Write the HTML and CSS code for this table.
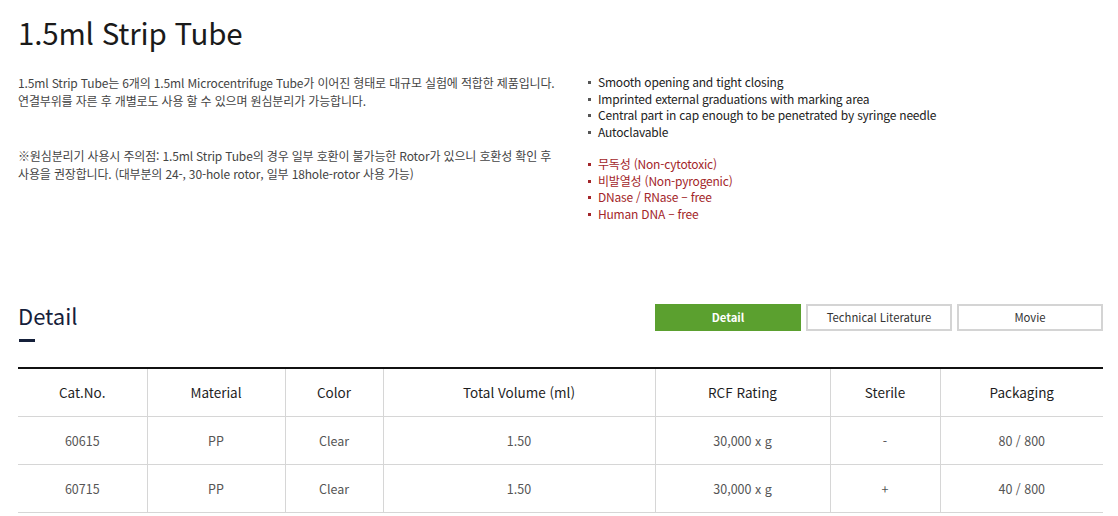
FILE: index.html
```html
<!DOCTYPE html>
<html lang="ko">
<head>
<meta charset="utf-8">
<title>1.5ml Strip Tube</title>
<link rel="stylesheet" href="styles.css">
</head>
<body>
<div class="page">
  <h1 class="title">1.5ml Strip Tube</h1>
  <div class="intro">
    <div class="desc">
      <p>1.5ml Strip Tube는 6개의 1.5ml Microcentrifuge Tube가 이어진 형태로 대규모 실험에 적합한 제품입니다.<br>연결부위를 자른 후 개별로도 사용 할 수 있으며 원심분리가 가능합니다.</p>
      <p class="note">※원심분리기 사용시 주의점: 1.5ml Strip Tube의 경우 일부 호환이 불가능한 Rotor가 있으니 호환성 확인 후<br>사용을 권장합니다. (대부분의 24-, 30-hole rotor, 일부 18hole-rotor 사용 가능)</p>
    </div>
    <div class="features">
      <ul class="list">
        <li>Smooth opening and tight closing</li>
        <li>Imprinted external graduations with marking area</li>
        <li>Central part in cap enough to be penetrated by syringe needle</li>
        <li>Autoclavable</li>
      </ul>
      <ul class="list red">
        <li>무독성 (Non-cytotoxic)</li>
        <li>비발열성 (Non-pyrogenic)</li>
        <li>DNase / RNase – free</li>
        <li>Human DNA – free</li>
      </ul>
    </div>
  </div>
  <div class="detail-head">
    <h2 class="detail-title">Detail</h2>
    <div class="tabs">
      <a class="tab active">Detail</a>
      <a class="tab">Technical Literature</a>
      <a class="tab">Movie</a>
    </div>
  </div>
  <table class="spec">
    <colgroup>
      <col style="width:129px"><col style="width:138px"><col style="width:98px"><col style="width:272px"><col style="width:175px"><col style="width:110px"><col>
    </colgroup>
    <thead>
      <tr><th>Cat.No.</th><th>Material</th><th>Color</th><th>Total Volume (ml)</th><th>RCF Rating</th><th>Sterile</th><th>Packaging</th></tr>
    </thead>
    <tbody>
      <tr><td>60615</td><td>PP</td><td>Clear</td><td>1.50</td><td>30,000 x g</td><td>-</td><td>80 / 800</td></tr>
      <tr><td>60715</td><td>PP</td><td>Clear</td><td>1.50</td><td>30,000 x g</td><td>+</td><td>40 / 800</td></tr>
    </tbody>
  </table>
</div>
</body>
</html>
```

FILE: styles.css
```css
* { box-sizing: border-box; }
body {
  margin: 0;
  background: #fff;
  font-family: "Noto Sans CJK KR", "Noto Sans", sans-serif;
  color: #333;
}
.page {
  padding: 0 15px 0 18px;
}
.title {
  margin: 0;
  padding-top: 12px;
  font-size: 29.5px;
  line-height: 40px;
  font-weight: 400;
  color: #1a1a1a;
  letter-spacing: -0.2px;
}
.intro {
  display: grid;
  grid-template-columns: 568px 1fr;
  margin-top: 22px;
}
.desc p {
  margin: 0;
  font-size: 12px;
  line-height: 17.5px;
  color: #444;
  letter-spacing: -0.15px;
}
.desc p.note {
  margin-top: 38px;
}
.features {
  padding-left: 2px;
}
.list {
  list-style: none;
  margin: 0;
  padding: 0;
  font-size: 12px;
  line-height: 16.5px;
  color: #222;
  letter-spacing: -0.2px;
}
.list li {
  position: relative;
  padding-left: 10px;
}
.list li::before {
  content: "";
  position: absolute;
  left: 0;
  top: 7px;
  width: 3px;
  height: 3px;
  background: #555;
}
.list.red {
  margin-top: 16px;
  color: #a3262a;
}
.list.red li::before { background: #a3262a; }
.detail-head {
  display: flex;
  justify-content: space-between;
  align-items: flex-start;
  margin-top: 79px;
}
.detail-title {
  margin: 0;
  font-size: 22px;
  line-height: 28px;
  font-weight: 400;
  color: #15203a;
  position: relative;
  padding-bottom: 13px;
}
.detail-title::after {
  content: "";
  position: absolute;
  left: 1px;
  bottom: 0;
  width: 16px;
  height: 3px;
  background: #15203a;
}
.tabs {
  display: flex;
  gap: 5px;
  margin-top: 3px;
}
.tab {
  display: block;
  width: 146px;
  height: 27px;
  line-height: 23px;
  text-align: center;
  font-size: 11.3px;
  color: #333;
  border: 2px solid #d4d4d4;
  background: #fff;
}
.tab.active {
  background: #5ba02f;
  border-color: #5ba02f;
  color: #fff;
  font-weight: 700;
}
.spec {
  margin-top: 25px;
  width: 1085px;
  border-collapse: collapse;
  table-layout: fixed;
  border-top: 2px solid #111;
}
.spec th, .spec td {
  text-align: center;
  border-bottom: 1px solid #d6d6d6;
  border-left: 1px solid #d6d6d6;
}
.spec th:first-child, .spec td:first-child { border-left: 0; }
.spec th {
  height: 48px;
  font-size: 13.5px;
  font-weight: 400;
  color: #1e1e1e;
}
.spec td {
  height: 48px;
  font-size: 12.5px;
  color: #555;
}
```
